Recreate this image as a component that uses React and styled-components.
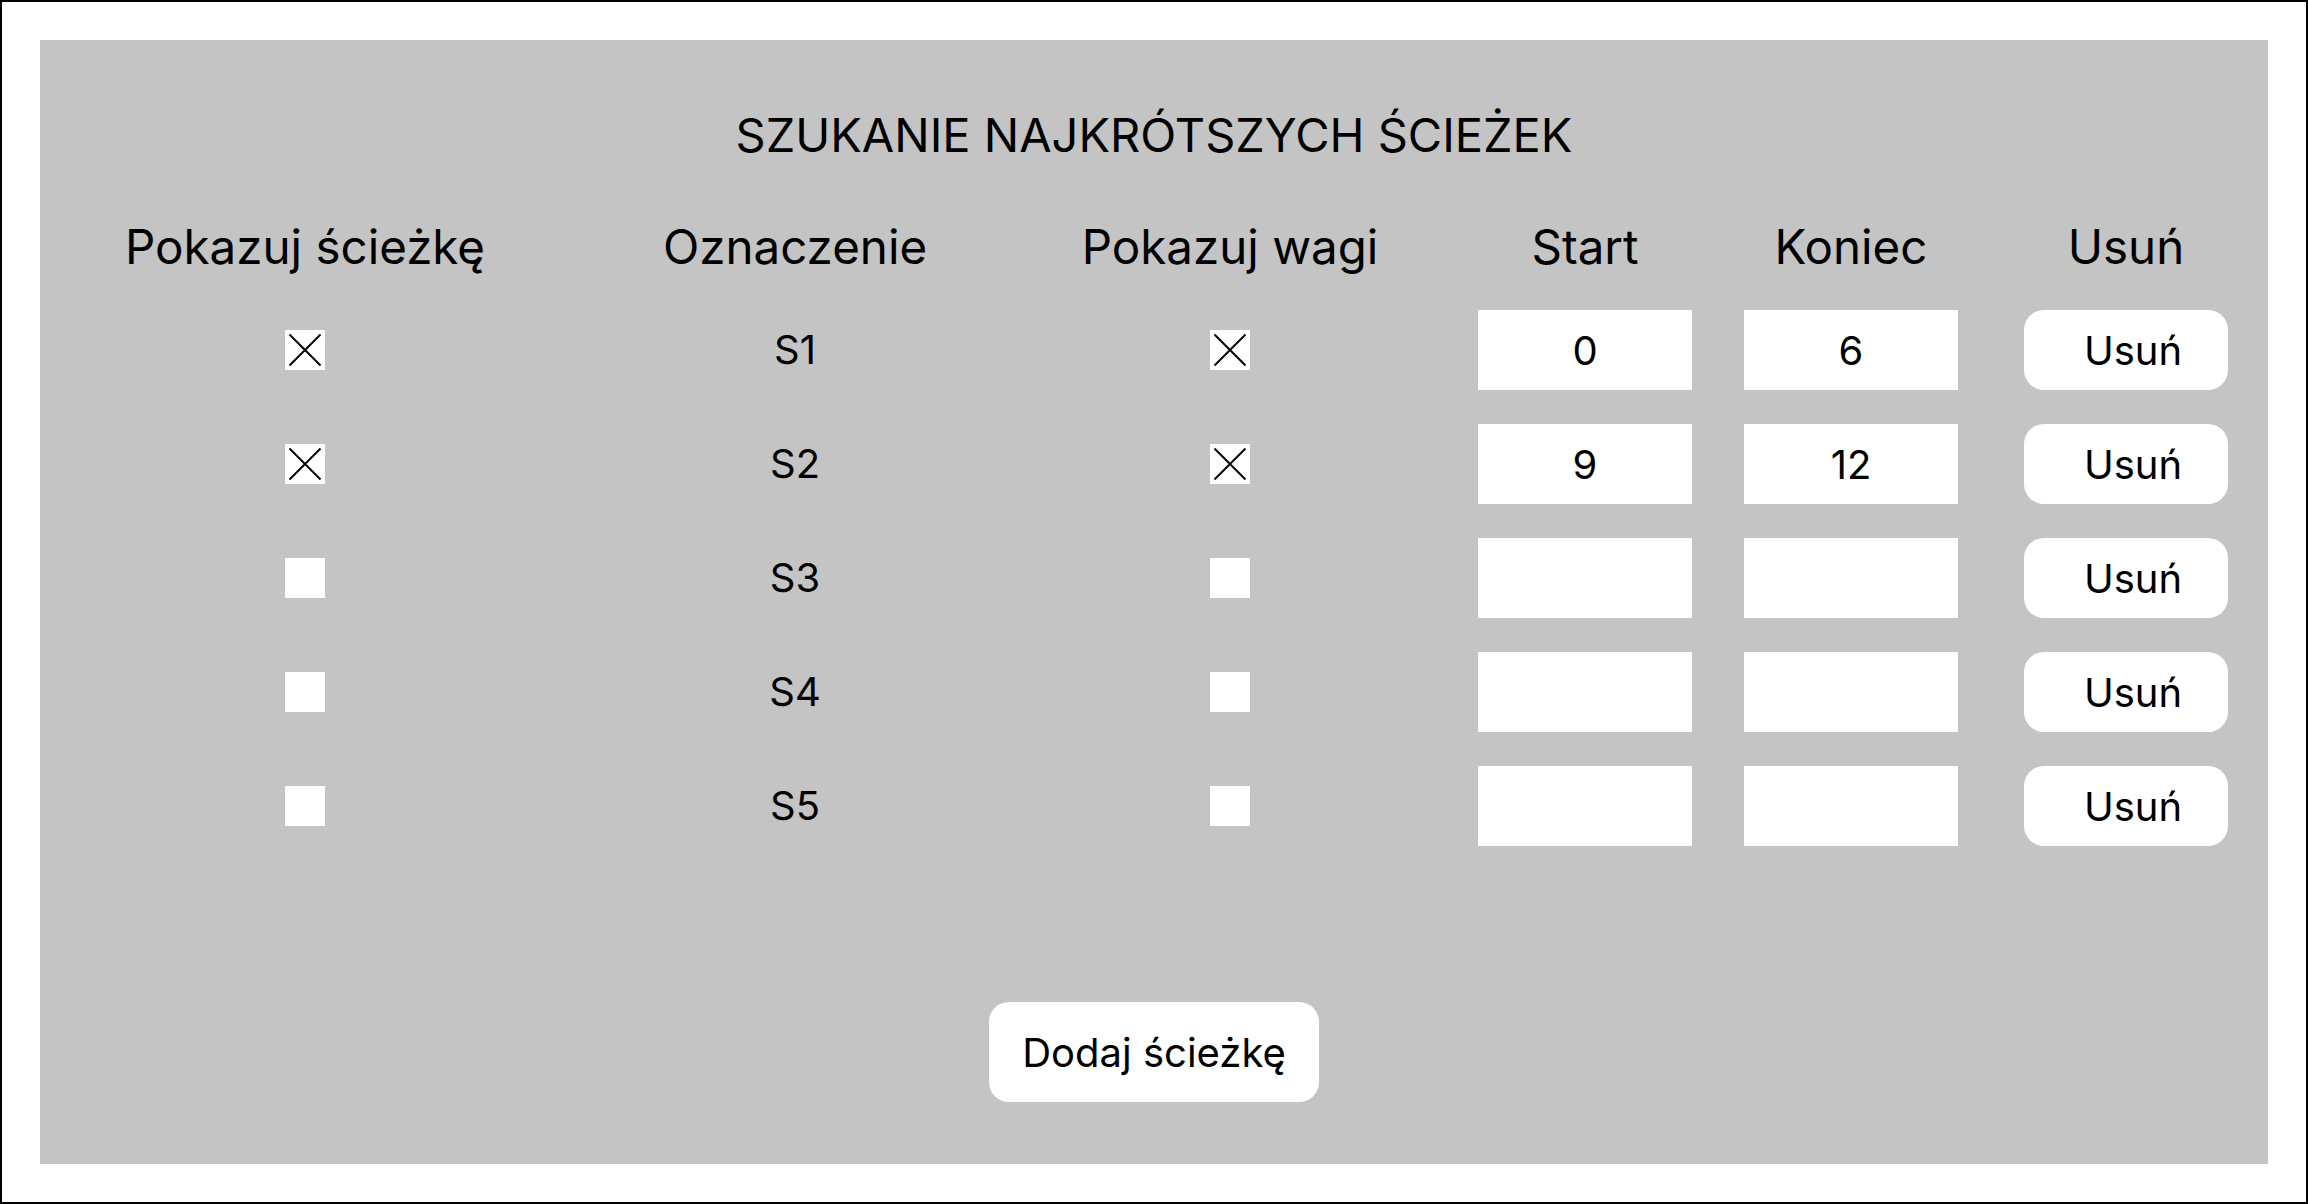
import React from 'react';
import styled, { createGlobalStyle } from 'styled-components';

const GlobalStyle = createGlobalStyle`
  html, body {
    margin: 0;
    padding: 0;
    background: #ffffff;
  }
  * {
    box-sizing: border-box;
  }
`

const Frame = styled.div`
  width: 2308px;
  height: 1204px;
  border: 2px solid #000000;
  padding: 38px;
  background-color: #ffffff;
  font-family: Inter, "Noto Sans", sans-serif;
  color: #000000;
`

const Panel = styled.main`
  width: 2228px;
  height: 1124px;
  background-color: #c4c4c4;
  padding-top: 67px;
  display: flex;
  flex-direction: column;
  align-items: stretch;
`

const Title = styled.h1`
  margin: 0;
  font-size: 47px;
  font-weight: 400;
  line-height: 1.2;
  text-align: center;
`

const Table = styled.div`
  display: grid;
  grid-template-columns: 530px 450px 420px 290px 242px 308px;
  align-items: center;
`

const HeaderRow = styled(Table)`
  margin-top: 55px;
`

const Rows = styled(Table)`
  margin-top: 35px;
  grid-auto-rows: 80px;
  row-gap: 34px;
`

const HeadCell = styled.div`
  font-size: 47.5px;
  line-height: 1.2;
  text-align: center;
  white-space: nowrap;
`

const Cell = styled.div`
  height: 100%;
  display: flex;
  align-items: center;
  justify-content: center;
`

const Label = styled.span`
  font-size: 40px;
  line-height: 1;
`

const Box = styled.div`
  width: 40px;
  height: 40px;
  background-color: #ffffff;
  display: flex;
  align-items: center;
  justify-content: center;
`

const Field = styled.div`
  width: 214px;
  height: 80px;
  flex-shrink: 0;
  background-color: #ffffff;
  display: flex;
  align-items: center;
  justify-content: center;
  font-size: 40px;
`

const RemoveButton = styled.button`
  width: 204px;
  height: 80px;
  flex-shrink: 0;
  border: none;
  border-radius: 20px;
  background-color: #ffffff;
  padding: 0 0 0 14px;
  font-family: Inter, "Noto Sans", sans-serif;
  font-size: 40px;
  color: #000000;
`

const Footer = styled.div`
  margin-top: 156px;
  display: flex;
  justify-content: center;
`

const AddButton = styled.button`
  width: 330px;
  height: 100px;
  border: none;
  border-radius: 20px;
  background-color: #ffffff;
  padding: 0;
  font-family: Inter, "Noto Sans", sans-serif;
  font-size: 40px;
  color: #000000;
`

const Checkbox = ({ checked }) => (
  <Box>
    {checked && (
      <svg width="40" height="40" viewBox="0 0 40 40">
        <path d="M4.5 4.5 L35.5 35.5 M35.5 4.5 L4.5 35.5" stroke="#000" strokeWidth="2" fill="none" />
      </svg>
    )}
  </Box>
);

const paths = [
  { name: 'S1', show: true, weights: true, start: '0', end: '6' },
  { name: 'S2', show: true, weights: true, start: '9', end: '12' },
  { name: 'S3', show: false, weights: false, start: '', end: '' },
  { name: 'S4', show: false, weights: false, start: '', end: '' },
  { name: 'S5', show: false, weights: false, start: '', end: '' },
];

const headers = ['Pokazuj ścieżkę', 'Oznaczenie', 'Pokazuj wagi', 'Start', 'Koniec', 'Usuń'];

const App = () => {
  return (
    <>
      <GlobalStyle />
      <Frame>
        <Panel>
          <Title>SZUKANIE NAJKRÓTSZYCH ŚCIEŻEK</Title>
          <HeaderRow>
            {headers.map(h => <HeadCell key={h}>{h}</HeadCell>)}
          </HeaderRow>
          <Rows>
            {paths.map(p => (
              <React.Fragment key={p.name}>
                <Cell><Checkbox checked={p.show} /></Cell>
                <Cell><Label>{p.name}</Label></Cell>
                <Cell><Checkbox checked={p.weights} /></Cell>
                <Cell><Field>{p.start}</Field></Cell>
                <Cell><Field>{p.end}</Field></Cell>
                <Cell><RemoveButton>Usuń</RemoveButton></Cell>
              </React.Fragment>
            ))}
          </Rows>
          <Footer>
            <AddButton>Dodaj ścieżkę</AddButton>
          </Footer>
        </Panel>
      </Frame>
    </>
  );
};

export default App;
